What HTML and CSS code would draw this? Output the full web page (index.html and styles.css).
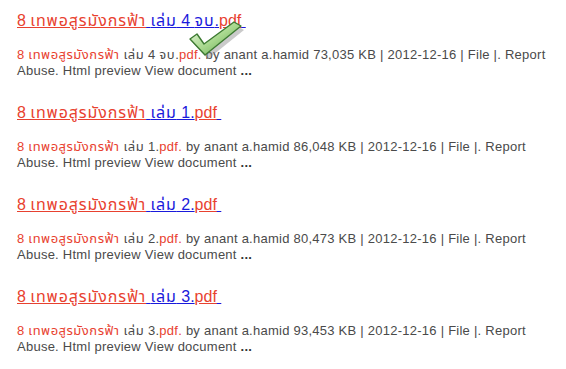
FILE: index.html
```html
<!DOCTYPE html>
<html lang="th">
<head>
<meta charset="utf-8">
<title>8 เทพอสูรมังกรฟ้า</title>
<link rel="stylesheet" href="styles.css">
</head>
<body>
<div class="results">
  <div class="result">
    <a class="title" href="#"><span class="hl">8 <span class="th">เทพอสูรมังกรฟ้า</span></span> <span class="th">เล่ม</span> 4 <span class="th">จบ</span>.<span class="hl">pdf</span>&nbsp;</a>
    <p class="snippet"><span class="hl">8 <span class="th">เทพอสูรมังกรฟ้า</span></span> <span class="th">เล่ม</span> 4 <span class="th">จบ</span>.<span class="hl">pdf.</span> by anant a.hamid 73,035 KB | 2012-12-16 | File |. Report Abuse. Html preview View document <b>...</b></p>
    <svg class="check" width="60" height="42" viewBox="0 0 60 42" aria-hidden="true">
      <defs>
        <linearGradient id="g" x1="0" y1="0" x2="1" y2="1">
          <stop offset="0" stop-color="#eef9e6"/>
          <stop offset="0.5" stop-color="#a9d98f"/>
          <stop offset="1" stop-color="#5a9f45"/>
        </linearGradient>
      </defs>
      <path d="M3 18 L10 13 L17 23 L47 1 L54 5 L18 34 Z" fill="#8a8a8a" opacity="0.45" transform="translate(3,4)"/>
      <path d="M3 18 L10 13 L17 23 L47 1 L54 5 L18 34 Z" fill="url(#g)" stroke="#3d7a32" stroke-width="1.4" stroke-linejoin="round"/>
    </svg>
  </div>
  <div class="result">
    <a class="title" href="#"><span class="hl">8 <span class="th">เทพอสูรมังกรฟ้า</span></span> <span class="th">เล่ม</span> 1.<span class="hl">pdf</span>&nbsp;</a>
    <p class="snippet"><span class="hl">8 <span class="th">เทพอสูรมังกรฟ้า</span></span> <span class="th">เล่ม</span> 1.<span class="hl">pdf.</span> by anant a.hamid 86,048 KB | 2012-12-16 | File |. Report Abuse. Html preview View document <b>...</b></p>
  </div>
  <div class="result">
    <a class="title" href="#"><span class="hl">8 <span class="th">เทพอสูรมังกรฟ้า</span></span> <span class="th">เล่ม</span> 2.<span class="hl">pdf</span>&nbsp;</a>
    <p class="snippet"><span class="hl">8 <span class="th">เทพอสูรมังกรฟ้า</span></span> <span class="th">เล่ม</span> 2.<span class="hl">pdf.</span> by anant a.hamid 80,473 KB | 2012-12-16 | File |. Report Abuse. Html preview View document <b>...</b></p>
  </div>
  <div class="result">
    <a class="title" href="#"><span class="hl">8 <span class="th">เทพอสูรมังกรฟ้า</span></span> <span class="th">เล่ม</span> 3.<span class="hl">pdf</span>&nbsp;</a>
    <p class="snippet"><span class="hl">8 <span class="th">เทพอสูรมังกรฟ้า</span></span> <span class="th">เล่ม</span> 3.<span class="hl">pdf.</span> by anant a.hamid 93,453 KB | 2012-12-16 | File |. Report Abuse. Html preview View document <b>...</b></p>
  </div>
</div>
</body>
</html>
```

FILE: styles.css
```css
html, body {
  margin: 0;
  padding: 0;
  background: #ffffff;
}
body {
  font-family: "Liberation Sans", Arial, "Noto Sans Thai", "DejaVu Sans", sans-serif;
}
.results {
  padding: 11px 0 0 17px;
  width: 545px;
}
.result {
  position: relative;
  margin-bottom: 24px;
}
.title {
  display: inline-block;
  font-size: 16px;
  line-height: 19px;
  color: #1a1adb;
  text-decoration: underline;
  text-decoration-color: #1a1adb;
}
.title .hl {
  color: #e8412f;
  text-decoration: underline;
}
.title .th {
  letter-spacing: 0.9px;
}
.snippet {
  margin: 17px 0 0 0;
  font-size: 13px;
  line-height: 16px;
  letter-spacing: 0.25px;
  color: #4a4a4a;
}
.snippet .hl {
  color: #e8412f;
}
.snippet .th {
  letter-spacing: 0.5px;
}
.snippet b {
  color: #333;
}
.check {
  position: absolute;
  left: 170px;
  top: 10px;
}
```
